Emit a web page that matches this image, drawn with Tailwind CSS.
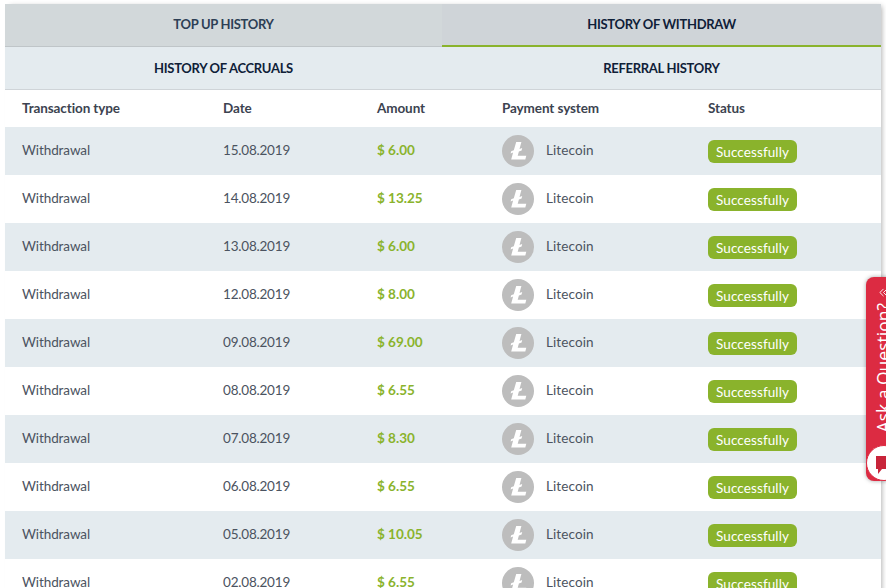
<!DOCTYPE html>
<html lang="en">
    <head>
        <meta charset="UTF-8">
        <title>History</title>
        <script src="https://cdn.jsdelivr.net/npm/@tailwindcss/browser@4"></script>
    </head>
    <body class="h-[588px] overflow-hidden bg-white font-['Lato','Noto_Sans',sans-serif]">
        <main class="relative h-[588px] overflow-hidden pt-[4px] pl-[5px]">
            <section class="w-[876px] shadow-[3px_0_5px_-2px_rgba(0,0,0,0.3)]">
                <!-- Tabs -->
                <div class="grid grid-cols-[437px_1fr] h-[43px] text-[13px] tracking-[-0.3px] font-bold">
                    <div class="flex items-center justify-center bg-[#d2d8da] text-[#2d3f55] border-b border-[#bfc5c8]">TOP UP HISTORY</div>
                    <div class="flex items-center justify-center bg-[#cfd4d8] text-[#0f2038] border-b-2 border-[#8ab32c]">HISTORY OF WITHDRAW</div>
                </div>
                <div class="grid grid-cols-[437px_1fr] h-[43px] pt-[1px] text-[13px] tracking-[-0.3px] font-bold text-[#0f2038] bg-[#e4ebef] border-b border-[#cfd4d8]">
                    <div class="flex items-center justify-center">HISTORY OF ACCRUALS</div>
                    <div class="flex items-center justify-center">REFERRAL HISTORY</div>
                </div>

                <!-- Table head -->
                <div class="grid grid-cols-[201px_154px_125px_206px_1fr] pl-[17px] h-[37px] items-center bg-white text-[13.5px] tracking-[-0.1px] font-bold text-[#3c4350]">
                    <div>Transaction type</div>
                    <div>Date</div>
                    <div>Amount</div>
                    <div>Payment system</div>
                    <div>Status</div>
                </div>

                <!-- Rows -->
                <div class="grid grid-cols-[201px_154px_125px_44px_162px_1fr] pl-[17px] pb-[2px] h-[48px] items-center bg-[#e4ebef] text-[13.5px] text-[#4b5360]">
                    <div class="tracking-[-0.1px]">Withdrawal</div>
                    <div class="tracking-[-0.2px]">15.08.2019</div>
                    <div class="font-bold text-[#8ab32c]">$ 6.00</div>
                    <svg viewBox="0 0 32 32" class="mt-[2px] w-[32px] h-[32px]"><circle cx="16" cy="16" r="16" fill="#bdbdbd"/><path d="M14.2 7h5.2l-1.9 7 2.7-1-.6 2.4-2.7 1-1.2 4.3h8.6l-1 3.8H9.2l1.9-6.9-2.5.9.6-2.3 2.6-1z" fill="#fff"/></svg>
                    <div class="tracking-[0.1px]">Litecoin</div>
                    <div class="pt-[2px]"><span class="inline-block h-[23px] leading-[25px] px-[8px] rounded-[6px] bg-[#8ab32c] text-white tracking-[0.1px]">Successfully</span></div>
                </div>
                <div class="grid grid-cols-[201px_154px_125px_44px_162px_1fr] pl-[17px] pb-[2px] h-[48px] items-center bg-white text-[13.5px] text-[#4b5360]">
                    <div class="tracking-[-0.1px]">Withdrawal</div>
                    <div class="tracking-[-0.2px]">14.08.2019</div>
                    <div class="font-bold text-[#8ab32c]">$ 13.25</div>
                    <svg viewBox="0 0 32 32" class="mt-[2px] w-[32px] h-[32px]"><circle cx="16" cy="16" r="16" fill="#bdbdbd"/><path d="M14.2 7h5.2l-1.9 7 2.7-1-.6 2.4-2.7 1-1.2 4.3h8.6l-1 3.8H9.2l1.9-6.9-2.5.9.6-2.3 2.6-1z" fill="#fff"/></svg>
                    <div class="tracking-[0.1px]">Litecoin</div>
                    <div class="pt-[2px]"><span class="inline-block h-[23px] leading-[25px] px-[8px] rounded-[6px] bg-[#8ab32c] text-white tracking-[0.1px]">Successfully</span></div>
                </div>
                <div class="grid grid-cols-[201px_154px_125px_44px_162px_1fr] pl-[17px] pb-[2px] h-[48px] items-center bg-[#e4ebef] text-[13.5px] text-[#4b5360]">
                    <div class="tracking-[-0.1px]">Withdrawal</div>
                    <div class="tracking-[-0.2px]">13.08.2019</div>
                    <div class="font-bold text-[#8ab32c]">$ 6.00</div>
                    <svg viewBox="0 0 32 32" class="mt-[2px] w-[32px] h-[32px]"><circle cx="16" cy="16" r="16" fill="#bdbdbd"/><path d="M14.2 7h5.2l-1.9 7 2.7-1-.6 2.4-2.7 1-1.2 4.3h8.6l-1 3.8H9.2l1.9-6.9-2.5.9.6-2.3 2.6-1z" fill="#fff"/></svg>
                    <div class="tracking-[0.1px]">Litecoin</div>
                    <div class="pt-[2px]"><span class="inline-block h-[23px] leading-[25px] px-[8px] rounded-[6px] bg-[#8ab32c] text-white tracking-[0.1px]">Successfully</span></div>
                </div>
                <div class="grid grid-cols-[201px_154px_125px_44px_162px_1fr] pl-[17px] pb-[2px] h-[48px] items-center bg-white text-[13.5px] text-[#4b5360]">
                    <div class="tracking-[-0.1px]">Withdrawal</div>
                    <div class="tracking-[-0.2px]">12.08.2019</div>
                    <div class="font-bold text-[#8ab32c]">$ 8.00</div>
                    <svg viewBox="0 0 32 32" class="mt-[2px] w-[32px] h-[32px]"><circle cx="16" cy="16" r="16" fill="#bdbdbd"/><path d="M14.2 7h5.2l-1.9 7 2.7-1-.6 2.4-2.7 1-1.2 4.3h8.6l-1 3.8H9.2l1.9-6.9-2.5.9.6-2.3 2.6-1z" fill="#fff"/></svg>
                    <div class="tracking-[0.1px]">Litecoin</div>
                    <div class="pt-[2px]"><span class="inline-block h-[23px] leading-[25px] px-[8px] rounded-[6px] bg-[#8ab32c] text-white tracking-[0.1px]">Successfully</span></div>
                </div>
                <div class="grid grid-cols-[201px_154px_125px_44px_162px_1fr] pl-[17px] pb-[2px] h-[48px] items-center bg-[#e4ebef] text-[13.5px] text-[#4b5360]">
                    <div class="tracking-[-0.1px]">Withdrawal</div>
                    <div class="tracking-[-0.2px]">09.08.2019</div>
                    <div class="font-bold text-[#8ab32c]">$ 69.00</div>
                    <svg viewBox="0 0 32 32" class="mt-[2px] w-[32px] h-[32px]"><circle cx="16" cy="16" r="16" fill="#bdbdbd"/><path d="M14.2 7h5.2l-1.9 7 2.7-1-.6 2.4-2.7 1-1.2 4.3h8.6l-1 3.8H9.2l1.9-6.9-2.5.9.6-2.3 2.6-1z" fill="#fff"/></svg>
                    <div class="tracking-[0.1px]">Litecoin</div>
                    <div class="pt-[2px]"><span class="inline-block h-[23px] leading-[25px] px-[8px] rounded-[6px] bg-[#8ab32c] text-white tracking-[0.1px]">Successfully</span></div>
                </div>
                <div class="grid grid-cols-[201px_154px_125px_44px_162px_1fr] pl-[17px] pb-[2px] h-[48px] items-center bg-white text-[13.5px] text-[#4b5360]">
                    <div class="tracking-[-0.1px]">Withdrawal</div>
                    <div class="tracking-[-0.2px]">08.08.2019</div>
                    <div class="font-bold text-[#8ab32c]">$ 6.55</div>
                    <svg viewBox="0 0 32 32" class="mt-[2px] w-[32px] h-[32px]"><circle cx="16" cy="16" r="16" fill="#bdbdbd"/><path d="M14.2 7h5.2l-1.9 7 2.7-1-.6 2.4-2.7 1-1.2 4.3h8.6l-1 3.8H9.2l1.9-6.9-2.5.9.6-2.3 2.6-1z" fill="#fff"/></svg>
                    <div class="tracking-[0.1px]">Litecoin</div>
                    <div class="pt-[2px]"><span class="inline-block h-[23px] leading-[25px] px-[8px] rounded-[6px] bg-[#8ab32c] text-white tracking-[0.1px]">Successfully</span></div>
                </div>
                <div class="grid grid-cols-[201px_154px_125px_44px_162px_1fr] pl-[17px] pb-[2px] h-[48px] items-center bg-[#e4ebef] text-[13.5px] text-[#4b5360]">
                    <div class="tracking-[-0.1px]">Withdrawal</div>
                    <div class="tracking-[-0.2px]">07.08.2019</div>
                    <div class="font-bold text-[#8ab32c]">$ 8.30</div>
                    <svg viewBox="0 0 32 32" class="mt-[2px] w-[32px] h-[32px]"><circle cx="16" cy="16" r="16" fill="#bdbdbd"/><path d="M14.2 7h5.2l-1.9 7 2.7-1-.6 2.4-2.7 1-1.2 4.3h8.6l-1 3.8H9.2l1.9-6.9-2.5.9.6-2.3 2.6-1z" fill="#fff"/></svg>
                    <div class="tracking-[0.1px]">Litecoin</div>
                    <div class="pt-[2px]"><span class="inline-block h-[23px] leading-[25px] px-[8px] rounded-[6px] bg-[#8ab32c] text-white tracking-[0.1px]">Successfully</span></div>
                </div>
                <div class="grid grid-cols-[201px_154px_125px_44px_162px_1fr] pl-[17px] pb-[2px] h-[48px] items-center bg-white text-[13.5px] text-[#4b5360]">
                    <div class="tracking-[-0.1px]">Withdrawal</div>
                    <div class="tracking-[-0.2px]">06.08.2019</div>
                    <div class="font-bold text-[#8ab32c]">$ 6.55</div>
                    <svg viewBox="0 0 32 32" class="mt-[2px] w-[32px] h-[32px]"><circle cx="16" cy="16" r="16" fill="#bdbdbd"/><path d="M14.2 7h5.2l-1.9 7 2.7-1-.6 2.4-2.7 1-1.2 4.3h8.6l-1 3.8H9.2l1.9-6.9-2.5.9.6-2.3 2.6-1z" fill="#fff"/></svg>
                    <div class="tracking-[0.1px]">Litecoin</div>
                    <div class="pt-[2px]"><span class="inline-block h-[23px] leading-[25px] px-[8px] rounded-[6px] bg-[#8ab32c] text-white tracking-[0.1px]">Successfully</span></div>
                </div>
                <div class="grid grid-cols-[201px_154px_125px_44px_162px_1fr] pl-[17px] pb-[2px] h-[48px] items-center bg-[#e4ebef] text-[13.5px] text-[#4b5360]">
                    <div class="tracking-[-0.1px]">Withdrawal</div>
                    <div class="tracking-[-0.2px]">05.08.2019</div>
                    <div class="font-bold text-[#8ab32c]">$ 10.05</div>
                    <svg viewBox="0 0 32 32" class="mt-[2px] w-[32px] h-[32px]"><circle cx="16" cy="16" r="16" fill="#bdbdbd"/><path d="M14.2 7h5.2l-1.9 7 2.7-1-.6 2.4-2.7 1-1.2 4.3h8.6l-1 3.8H9.2l1.9-6.9-2.5.9.6-2.3 2.6-1z" fill="#fff"/></svg>
                    <div class="tracking-[0.1px]">Litecoin</div>
                    <div class="pt-[2px]"><span class="inline-block h-[23px] leading-[25px] px-[8px] rounded-[6px] bg-[#8ab32c] text-white tracking-[0.1px]">Successfully</span></div>
                </div>
                <div class="grid grid-cols-[201px_154px_125px_44px_162px_1fr] pl-[17px] pb-[2px] h-[48px] items-center bg-white text-[13.5px] text-[#4b5360]">
                    <div class="tracking-[-0.1px]">Withdrawal</div>
                    <div class="tracking-[-0.2px]">02.08.2019</div>
                    <div class="font-bold text-[#8ab32c]">$ 6.55</div>
                    <svg viewBox="0 0 32 32" class="mt-[2px] w-[32px] h-[32px]"><circle cx="16" cy="16" r="16" fill="#bdbdbd"/><path d="M14.2 7h5.2l-1.9 7 2.7-1-.6 2.4-2.7 1-1.2 4.3h8.6l-1 3.8H9.2l1.9-6.9-2.5.9.6-2.3 2.6-1z" fill="#fff"/></svg>
                    <div class="tracking-[0.1px]">Litecoin</div>
                    <div class="pt-[2px]"><span class="inline-block h-[23px] leading-[25px] px-[8px] rounded-[6px] bg-[#8ab32c] text-white tracking-[0.1px]">Successfully</span></div>
                </div>
            </section>

            <!-- Ask a question widget -->
            <div class="absolute left-[866px] top-[277px] w-[40px] h-[204px] rounded-l-[8px] bg-[#dc2b42] shadow-[0_0_4px_rgba(0,0,0,0.35)]">
                <svg viewBox="0 0 10 10" fill="none" stroke="#fff" stroke-width="1" class="absolute left-[13px] top-[11px] w-[9px] h-[9px]"><path d="M5 1 1 5l4 4M9 1 5 5l4 4"/></svg>
                <div class="absolute left-[5px] bottom-[49px] [writing-mode:vertical-rl] rotate-180 whitespace-nowrap text-[17.5px] leading-[24px] text-white font-['Open_Sans',sans-serif]">Ask a Question?</div>
                <div class="absolute left-0 bottom-0 w-[36px] h-[36px] rounded-full bg-white border border-[#dc2b42]">
                    <svg viewBox="0 0 24 24" class="absolute left-[6px] top-[8px] w-[24px] h-[24px]"><path d="M3 2h19v13H9l-4 5v-5H3z" fill="#c8243a"/></svg>
                </div>
            </div>
        </main>
    </body>
</html>
